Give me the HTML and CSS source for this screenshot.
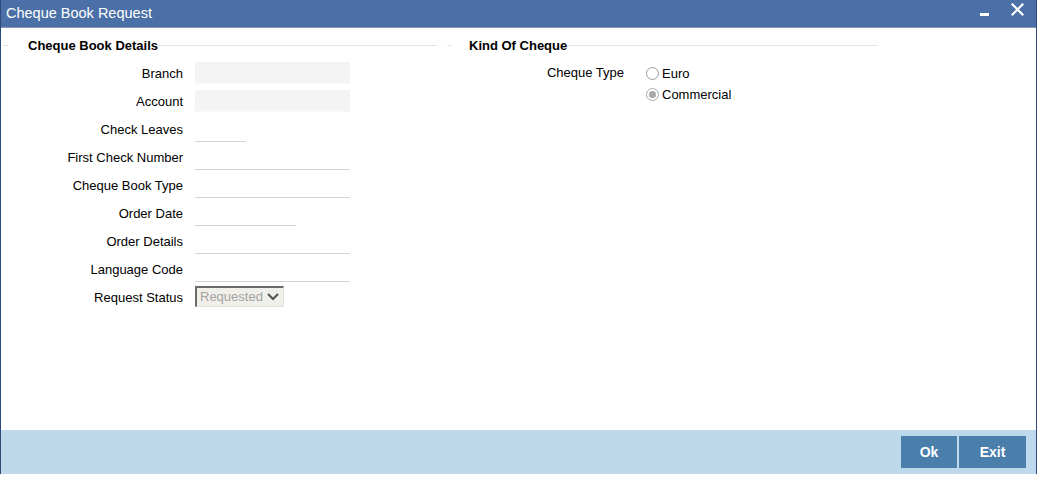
FILE: index.html
```html
<!DOCTYPE html>
<html>
<head>
<meta charset="utf-8">
<link rel="stylesheet" href="styles.css">
</head>
<body>
<div class="window">
  <div class="titlebar">
    <span class="title">Cheque Book Request</span>
    <div class="win-controls">
      <span class="minimize"></span>
      <svg class="close" width="13" height="13" viewBox="0 0 13 13"><path d="M1.5 1.5 L11.5 11.5 M11.5 1.5 L1.5 11.5" stroke="#fff" stroke-width="2.2" stroke-linecap="square"/></svg>
    </div>
  </div>
  <div class="body">
    <div class="section left">
      <div class="section-head"><span class="line-start"></span><span class="legend">Cheque Book Details</span><span class="line"></span></div>
      <div class="rows">
        <div class="row"><span class="label">Branch</span><span class="field filled"></span></div>
        <div class="row"><span class="label">Account</span><span class="field filled"></span></div>
        <div class="row"><span class="label">Check Leaves</span><span class="field line-field short"></span></div>
        <div class="row"><span class="label">First Check Number</span><span class="field line-field"></span></div>
        <div class="row"><span class="label">Cheque Book Type</span><span class="field line-field"></span></div>
        <div class="row"><span class="label">Order Date</span><span class="field line-field medium"></span></div>
        <div class="row"><span class="label">Order Details</span><span class="field line-field"></span></div>
        <div class="row"><span class="label">Language Code</span><span class="field line-field"></span></div>
        <div class="row"><span class="label">Request Status</span><span class="select"><span class="select-text">Requested</span><svg class="chev" width="14" height="10" viewBox="0 0 14 10"><path d="M2 2 L7 7 L12 2" fill="none" stroke="#555" stroke-width="2.2"/></svg></span></div>
      </div>
    </div>
    <div class="section right">
      <div class="section-head"><span class="line-start"></span><span class="legend">Kind Of Cheque</span><span class="line"></span></div>
      <div class="rows">
        <div class="radio-group">
          <span class="label rlabel">Cheque Type</span>
          <div class="radios">
            <div class="radio-row"><span class="radio"></span><span>Euro</span></div>
            <div class="radio-row"><span class="radio checked"></span><span>Commercial</span></div>
          </div>
        </div>
      </div>
    </div>
  </div>
  <div class="footer">
    <button class="btn ok">Ok</button>
    <button class="btn exit">Exit</button>
  </div>
</div>
</body>
</html>
```

FILE: styles.css
```css
* { box-sizing: border-box; }
html, body { margin: 0; padding: 0; background: #fff; }
body { font-family: "Liberation Sans", Arial, sans-serif; font-size: 13px; color: #000; }

.window {
  width: 1037px;
  height: 474px;
  border-left: 1px solid #2c4b7a;
  border-right: 1px solid #2c4b7a;
  display: flex;
  flex-direction: column;
}

.titlebar {
  height: 28px;
  background: #4a70a7;
  border-bottom: 1px solid #8699ad;
  display: flex;
  align-items: center;
  justify-content: space-between;
  padding-left: 5px;
  flex-shrink: 0;
}
.title { color: #fff; font-size: 14.5px; margin-top: -1px; }
.win-controls { display: flex; align-items: center; padding-right: 12px; gap: 22px; margin-top: -8px; }
.minimize { width: 9px; height: 3px; background: #fff; margin-top: 10px; }

.body {
  flex: 1;
  display: flex;
  padding-top: 8px;
  padding-left: 2px;
}
.section.left { width: 434px; }
.section.right { width: 431px; margin-left: 10px; }

.section-head { display: flex; align-items: center; height: 18px; }
.line-start { width: 5px; height: 1px; background: #e4e4e4; }
.legend { padding-left: 20px; font-weight: bold; font-size: 13px; white-space: nowrap; }
.right .legend { padding-left: 17px; }
.line { flex: 1; height: 1px; background: #e4e4e4; }

.rows { margin-top: 5px; }
.row { display: flex; align-items: center; height: 28px; }
.label { width: 180px; text-align: right; white-space: nowrap; }
.field { margin-left: 12px; width: 155px; height: 22px; }
.field.filled { background: #f4f4f4; border-bottom: 1px solid #f9f9f9; }
.line-field { border-bottom: 1px solid #d4d4d4; height: 22px; margin-top: 3px; }
.line-field.short { width: 51px; }
.line-field.medium { width: 101px; }

.select {
  margin-left: 12px;
  width: 89px;
  height: 21px;
  background: #f1efea;
  border-top: 2px solid #6a6a6a;
  border-left: 2px solid #6a6a6a;
  border-right: 1px solid #e4e2dc;
  border-bottom: 1px solid #e4e2dc;
  display: flex;
  align-items: center;
  justify-content: space-between;
  padding: 0 3px 0 3px;
  margin-top: -2px;
}
.select-text { color: #a3a3a3; font-size: 13px; }
.chev { margin-top: 1px; }

.radio-group { display: flex; align-items: flex-start; }
.rlabel { width: 177px; height: 28px; line-height: 28px; }
.radios { margin-left: 22px; padding-top: 4px; }
.radio-row { display: flex; align-items: center; height: 21px; font-size: 13px; }
.radio {
  width: 13px; height: 13px;
  border: 1px solid #9c9c9c;
  border-radius: 50%;
  background: #fff;
  margin-right: 3px;
  position: relative;
}
.radio.checked { border-color: #a9a9a9; }
.radio.checked::after {
  content: "";
  position: absolute;
  left: 2px; top: 2px;
  width: 7px; height: 7px;
  border-radius: 50%;
  background: #a8a8a8;
}

.footer {
  height: 44px;
  background: #bed9ec;
  display: flex;
  justify-content: flex-end;
  align-items: flex-start;
  padding-top: 6px;
  padding-right: 10px;
  gap: 2px;
  flex-shrink: 0;
}
.btn {
  height: 32px;
  border: none;
  background: #4a7eab;
  color: #fff;
  font-family: "Liberation Sans", Arial, sans-serif;
  font-weight: bold;
  font-size: 14px;
  padding: 0;
}
.btn.ok { width: 56px; }
.btn.exit { width: 67px; }
```
